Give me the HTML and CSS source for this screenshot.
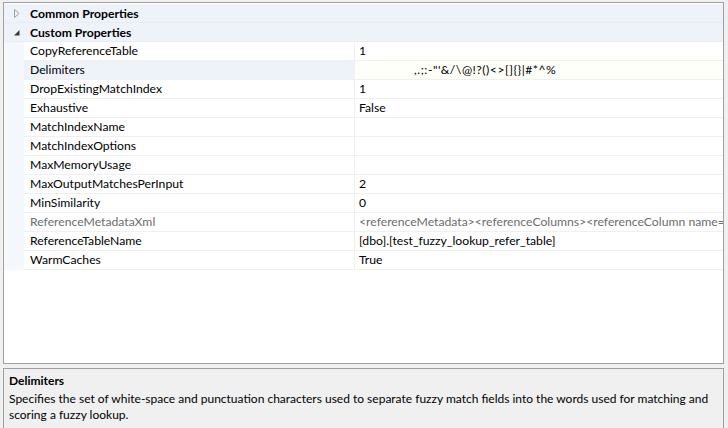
FILE: index.html
```html
<!DOCTYPE html>
<html>
<head>
<meta charset="utf-8">
<link rel="stylesheet" href="styles.css">
</head>
<body>
<div class="window">
  <div class="grid">
    <div class="group">
      <span class="toggle"><svg width="8" height="9" viewBox="0 0 8 9"><path d="M1.5 0.5 L6 4.5 L1.5 8.5 Z" fill="none" stroke="#a0a0a0" stroke-width="1"/></svg></span>
      <span class="group-name">Common Properties</span>
    </div>
    <div class="group">
      <span class="toggle"><svg width="8" height="9" viewBox="0 0 8 9"><path d="M6.5 2 L6.5 7.5 L1 7.5 Z" fill="#3c3c3c"/></svg></span>
      <span class="group-name">Custom Properties</span>
    </div>
    <div class="row"><span class="gutter"></span><span class="name">CopyReferenceTable</span><span class="value">1</span></div>
    <div class="row sel"><span class="gutter"></span><span class="name">Delimiters</span><span class="value delim">,.;:-"'&amp;/\@!?()&lt;&gt;[]{}|#*^%</span></div>
    <div class="row"><span class="gutter"></span><span class="name">DropExistingMatchIndex</span><span class="value">1</span></div>
    <div class="row"><span class="gutter"></span><span class="name">Exhaustive</span><span class="value">False</span></div>
    <div class="row"><span class="gutter"></span><span class="name">MatchIndexName</span><span class="value"></span></div>
    <div class="row"><span class="gutter"></span><span class="name">MatchIndexOptions</span><span class="value"></span></div>
    <div class="row"><span class="gutter"></span><span class="name">MaxMemoryUsage</span><span class="value"></span></div>
    <div class="row"><span class="gutter"></span><span class="name">MaxOutputMatchesPerInput</span><span class="value">2</span></div>
    <div class="row"><span class="gutter"></span><span class="name">MinSimilarity</span><span class="value">0</span></div>
    <div class="row ro"><span class="gutter"></span><span class="name">ReferenceMetadataXml</span><span class="value">&lt;referenceMetadata&gt;&lt;referenceColumns&gt;&lt;referenceColumn name=</span></div>
    <div class="row"><span class="gutter"></span><span class="name">ReferenceTableName</span><span class="value">[dbo].[test_fuzzy_lookup_refer_table]</span></div>
    <div class="row"><span class="gutter"></span><span class="name">WarmCaches</span><span class="value">True</span></div>
    <div class="filler"></div>
  </div>
  <div class="desc">
    <div class="desc-title">Delimiters</div>
    <div class="desc-text">Specifies the set of white-space and punctuation characters used to separate fuzzy match fields into the words used for matching and scoring a fuzzy lookup.</div>
  </div>
</div>
</body>
</html>
```
FILE: styles.css
```css
html, body {
  margin: 0;
  padding: 0;
  width: 728px;
  height: 428px;
  overflow: hidden;
  background: #f0f0f0;
}
body {
  font-family: Lato, "Open Sans", sans-serif;
  font-size: 12.2px;
  color: #000;
}
.window {
  display: flex;
  flex-direction: column;
  width: 728px;
  height: 428px;
  padding: 2px 4px 0 3px;
  box-sizing: border-box;
  gap: 4px;
}
.grid {
  height: 362px;
  flex: none;
  box-sizing: border-box;
  border: 1px solid #a0a0a0;
  padding-top: 1px;
  background: #fff;
  display: flex;
  flex-direction: column;
  overflow: hidden;
}
.group {
  height: 19px;
  flex: none;
  display: flex;
  align-items: center;
  background: #eef3fa;
  border-bottom: 1px solid #e8edf5;
  box-sizing: border-box;
}
.toggle {
  width: 26px;
  display: flex;
  justify-content: center;
}
.group-name {
  font-weight: bold;
}
.row {
  height: 19px;
  flex: none;
  display: flex;
  box-sizing: border-box;
}
.gutter {
  width: 20px;
  flex: none;
  background: #f4f7fb;
}
.name {
  width: 331px;
  flex: none;
  padding-left: 6px;
  box-sizing: border-box;
  border-bottom: 1px solid #f0f0f0;
  border-right: 1px solid #f0f0f0;
  line-height: 18px;
  white-space: nowrap;
}
.value {
  flex: 1;
  min-width: 0;
  padding-left: 4px;
  border-bottom: 1px solid #f0f0f0;
  line-height: 18px;
  white-space: nowrap;
  overflow: hidden;
}
.row.sel .name {
  background: #eef3fa;
}
.value.delim {
  padding-left: 59px;
  letter-spacing: 0.5px;
  background: #fffffa;
}
.row.ro .name, .row.ro .value {
  color: #6d6d6d;
}
.filler {
  flex: 1;
}
.desc {
  flex: 1;
  border: 1px solid #a0a0a0;
  border-bottom: none;
  background: #f0f0f0;
  padding: 3px 2px 0 5px;
  box-sizing: border-box;
  font-size: 12px;
}
.desc-title {
  font-weight: bold;
  line-height: 18px;
}
.desc-text {
  margin-top: 1px;
  line-height: 16px;
}
```
